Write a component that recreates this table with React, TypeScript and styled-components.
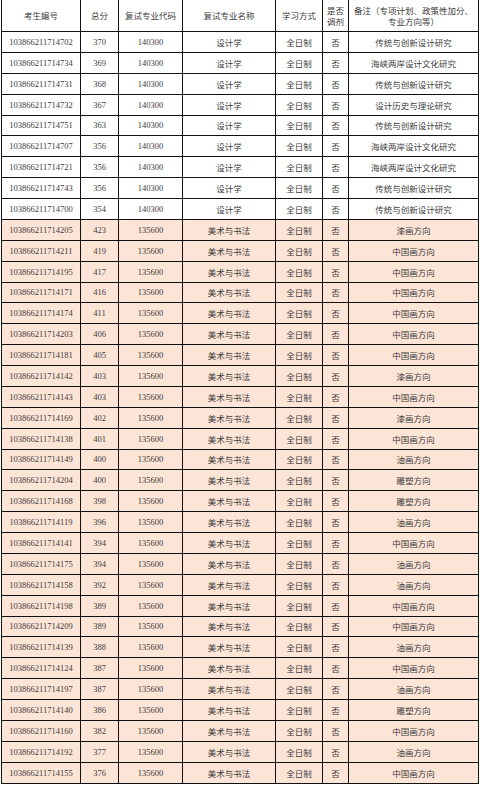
import React from 'react'
import styled, {createGlobalStyle} from 'styled-components'

const GlobalStyle = createGlobalStyle`
  html, body {
    margin: 0;
    padding: 0;
    background: #ffffff;
  }
`

const Table = styled.div`
  display: grid;
  grid-template-columns: 79px 38px 64px 93px 47px 26px 130px;
  grid-template-rows: 32px repeat(36, 20.89px);
  margin-left: 1px;
  width: max-content;
  border-left: 1px solid #111;
  font-family: 'Liberation Serif', 'Noto Sans CJK SC', serif;
  font-size: 8.5px;
  color: #3d3d3d;
  -webkit-font-smoothing: antialiased;
`

const HeaderCell = styled.div`
  box-sizing: border-box;
  display: flex;
  align-items: center;
  justify-content: center;
  padding-top: 2px;
  text-align: center;
  line-height: 11px;
  border-right: 1px solid #111;
  border-bottom: 1px solid #111;
  white-space: pre-line;
`

const Cell = styled.div<{$pink?: boolean}>`
  box-sizing: border-box;
  display: flex;
  align-items: center;
  justify-content: center;
  white-space: nowrap;
  border-right: 1px solid #111;
  border-bottom: 1px solid #111;
  background: ${(p) => (p.$pink ? '#fce4d6' : '#ffffff')};
`

interface Applicant {
  id: string
  score: number
  code: string
  major: string
  note: string
  pink: boolean
}

const headers = [
  '考生编号',
  '总分',
  '复试专业代码',
  '复试专业名称',
  '学习方式',
  '是否\n调剂',
  '备注（专项计划、政策性加分、\n专业方向等）',
]

// [last digits of 考生编号, 总分, 备注]
const designData: [string, number, string][] = [
  ['702', 370, '传统与创新设计研究'],
  ['734', 369, '海峡两岸设计文化研究'],
  ['731', 368, '传统与创新设计研究'],
  ['732', 367, '设计历史与理论研究'],
  ['751', 363, '传统与创新设计研究'],
  ['707', 356, '海峡两岸设计文化研究'],
  ['721', 356, '海峡两岸设计文化研究'],
  ['743', 356, '传统与创新设计研究'],
  ['700', 354, '传统与创新设计研究'],
]

const artData: [string, number, string][] = [
  ['205', 423, '漆画方向'],
  ['211', 419, '中国画方向'],
  ['195', 417, '中国画方向'],
  ['171', 416, '中国画方向'],
  ['174', 411, '中国画方向'],
  ['203', 406, '中国画方向'],
  ['181', 405, '中国画方向'],
  ['142', 403, '漆画方向'],
  ['143', 403, '中国画方向'],
  ['169', 402, '漆画方向'],
  ['138', 401, '中国画方向'],
  ['149', 400, '油画方向'],
  ['204', 400, '雕塑方向'],
  ['168', 398, '雕塑方向'],
  ['119', 396, '油画方向'],
  ['141', 394, '中国画方向'],
  ['175', 394, '油画方向'],
  ['158', 392, '油画方向'],
  ['198', 389, '中国画方向'],
  ['209', 389, '中国画方向'],
  ['139', 388, '油画方向'],
  ['124', 387, '中国画方向'],
  ['197', 387, '油画方向'],
  ['140', 386, '雕塑方向'],
  ['160', 382, '中国画方向'],
  ['192', 377, '油画方向'],
  ['155', 376, '中国画方向'],
]

const rows: Applicant[] = [
  ...designData.map(([s, score, note]) => ({
    id: '103866211714' + s,
    score,
    code: '140300',
    major: '设计学',
    note,
    pink: false,
  })),
  ...artData.map(([s, score, note]) => ({
    id: '103866211714' + s,
    score,
    code: '135600',
    major: '美术与书法',
    note,
    pink: true,
  })),
]

function App() {
  return (
    <>
      <GlobalStyle />
      <Table>
        {headers.map((h) => (
          <HeaderCell key={h}>{h}</HeaderCell>
        ))}
        {rows.map((r) => (
          <React.Fragment key={r.id}>
            <Cell $pink={r.pink}>{r.id}</Cell>
            <Cell $pink={r.pink}>{r.score}</Cell>
            <Cell $pink={r.pink}>{r.code}</Cell>
            <Cell $pink={r.pink}>{r.major}</Cell>
            <Cell $pink={r.pink}>全日制</Cell>
            <Cell $pink={r.pink}>否</Cell>
            <Cell $pink={r.pink}>{r.note}</Cell>
          </React.Fragment>
        ))}
      </Table>
    </>
  )
}

export default App
